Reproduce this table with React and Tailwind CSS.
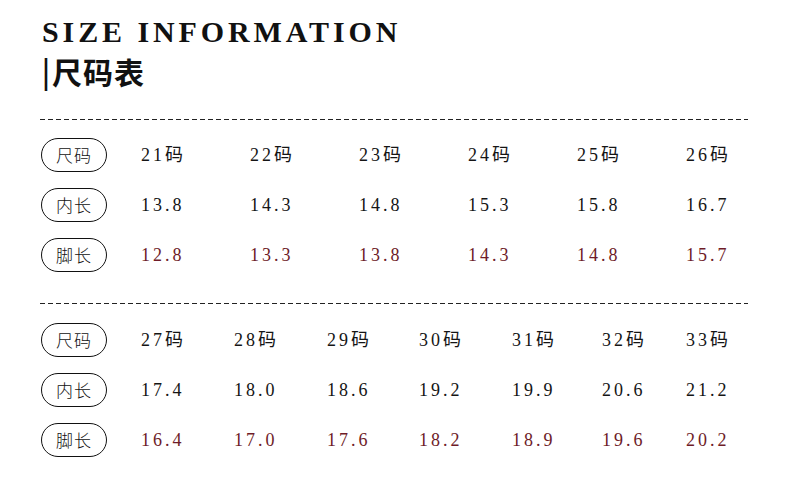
const sizes1 = [
  { size: '21码', inner: '13.8', foot: '12.8' },
  { size: '22码', inner: '14.3', foot: '13.3' },
  { size: '23码', inner: '14.8', foot: '13.8' },
  { size: '24码', inner: '15.3', foot: '14.3' },
  { size: '25码', inner: '15.8', foot: '14.8' },
  { size: '26码', inner: '16.7', foot: '15.7' },
];

const sizes2 = [
  { size: '27码', inner: '17.4', foot: '16.4' },
  { size: '28码', inner: '18.0', foot: '17.0' },
  { size: '29码', inner: '18.6', foot: '17.6' },
  { size: '30码', inner: '19.2', foot: '18.2' },
  { size: '31码', inner: '19.9', foot: '18.9' },
  { size: '32码', inner: '20.6', foot: '19.6' },
  { size: '33码', inner: '21.2', foot: '20.2' },
];

const serif = "font-['Liberation_Serif','Noto_Sans_CJK_SC',serif]";

function Dashed() {
  return <div className="h-px w-[708px] bg-[repeating-linear-gradient(to_right,#222_0_5px,transparent_5px_8px)]" />;
}

function Pill({ children }) {
  return (
    <div className="w-[66px] h-[34px] rounded-full border-[1.5px] border-[#111] flex items-center justify-center text-[17px] font-light tracking-[1px] text-[#111] font-['Noto_Sans_CJK_SC',sans-serif]">
      {children}
    </div>
  );
}

function SizeTable({ rows, cols }) {
  const lines = [
    { label: '尺码', key: 'size', color: 'text-[#151515]' },
    { label: '内长', key: 'inner', color: 'text-[#151515]' },
    { label: '脚长', key: 'foot', color: 'text-[#6e1c28]' },
  ];
  return (
    <div className="flex flex-col gap-[16px] pl-[1px]">
      {lines.map((line) => (
        <div key={line.label} className={`grid items-center ${cols}`}>
          <Pill>{line.label}</Pill>
          {rows.map((r) => (
            <div key={r.size} className={`${serif} text-[18px] tracking-[3px] ${line.color}`}>
              {r[line.key]}
            </div>
          ))}
        </div>
      ))}
    </div>
  );
}

export default function App() {
  return (
    <div className="w-[790px] h-[478px] bg-white pl-[40px] pt-[17px] overflow-hidden">
      <h1 className={`${serif} font-bold text-[30px] leading-[30px] tracking-[3.9px] text-[#111] pl-[2px]`}>
        SIZE INFORMATION
      </h1>
      <div className="mt-[6px] pl-[2px] flex items-center h-[36px] text-[#111]">
        <span className={`${serif} font-bold text-[36px] leading-[36px] mr-[2px]`}>|</span>
        <span className="font-['Noto_Sans_CJK_SC',sans-serif] font-bold text-[30px] leading-[36px] tracking-[1px]">尺码表</span>
      </div>

      <div className="mt-[30px]">
        <Dashed />
      </div>
      <div className="mt-[18px]">
        <SizeTable rows={sizes1} cols="grid-cols-[100px_109px_109px_109px_109px_109px_1fr]" />
      </div>

      <div className="mt-[31px]">
        <Dashed />
      </div>
      <div className="mt-[19px]">
        <SizeTable rows={sizes2} cols="grid-cols-[100px_93px_93px_92px_93px_90px_84px_1fr]" />
      </div>
    </div>
  );
}
